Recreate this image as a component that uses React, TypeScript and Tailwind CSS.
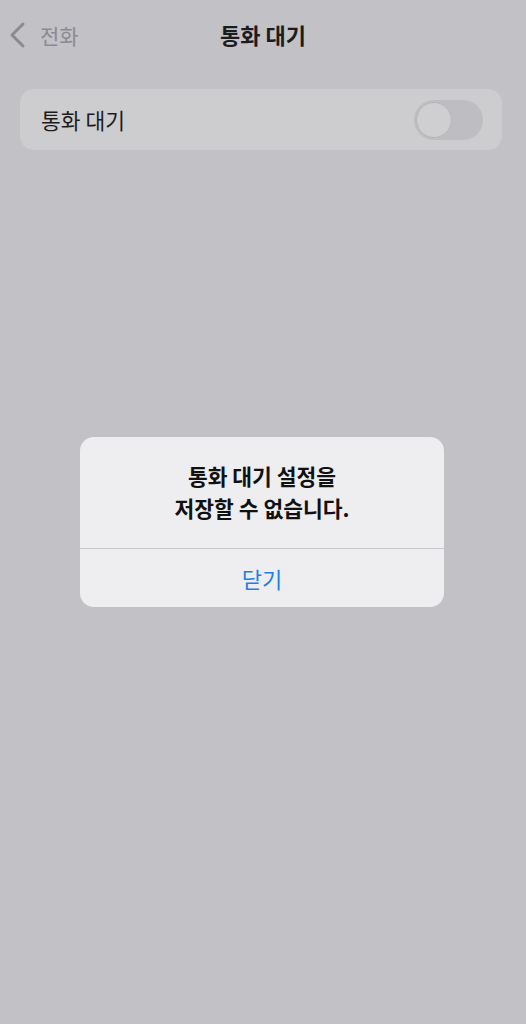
const font = { fontFamily: '"Noto Sans CJK KR", "Noto Sans", sans-serif' };

function BackChevron() {
  return (
    <svg width="20" height="28" viewBox="0 0 20 28" fill="none">
      <path d="M15 3 L4 14 L15 25" stroke="currentColor" strokeWidth="3" strokeLinecap="round" strokeLinejoin="round" />
    </svg>
  );
}

export default function App() {
  return (
    <div className="relative h-[1024px] w-[526px] overflow-hidden bg-[#c2c1c6]" style={font}>
      {/* navigation bar */}
      <div className="relative flex h-[68px] items-center justify-center">
        <div className="absolute left-[8px] top-[21px] flex items-center text-[#8b8a90]">
          <BackChevron />
          <span className="ml-[12px] text-[21px] leading-none">전화</span>
        </div>
        <h1 className="text-[22px] font-semibold leading-none text-[#1c1c1e]">통화 대기</h1>
      </div>

      {/* settings group */}
      <div className="ml-[20px] mr-[24px] mt-[21px] flex h-[61px] items-center justify-between rounded-[14px] bg-[#cdcdcf] pl-[21px] pr-[19px]">
        <span className="text-[21.5px] leading-none text-[#1c1c1e]">통화 대기</span>
        <div className="flex h-[40px] w-[69px] items-center rounded-full bg-[#bebdc2] p-[2px]">
          <div className="h-[36px] w-[36px] rounded-full border border-[#b5b4b9] bg-[#cfcfd1]" />
        </div>
      </div>

      {/* alert */}
      <div className="absolute left-[80px] top-[437px] w-[364px] overflow-hidden rounded-[14px] bg-[#eeeef0]">
        <div className="flex flex-col items-center px-4 pb-[24px] pt-[23px] text-center text-[21.5px] font-semibold leading-[32px] text-[#111]">
          <p>통화 대기 설정을</p>
          <p>저장할 수 없습니다.</p>
        </div>
        <div className="h-px bg-[#c9c9cd]" />
        <button className="flex h-[58px] w-full items-center justify-center text-[22px] text-[#1e7fe6]">
          닫기
        </button>
      </div>
    </div>
  );
}
